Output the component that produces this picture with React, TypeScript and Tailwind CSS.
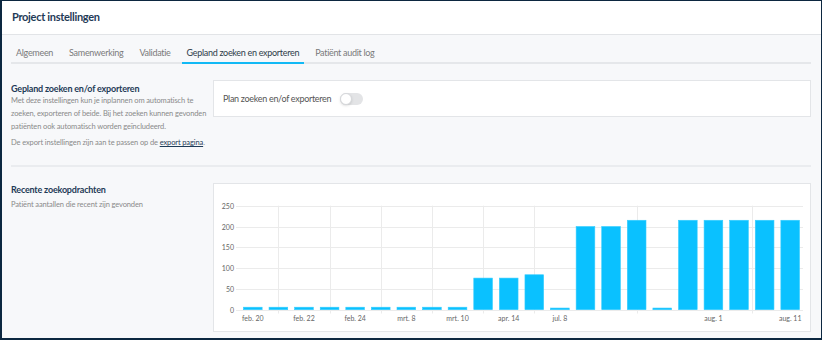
import React from 'react';

const tabs = ['Algemeen', 'Samenwerking', 'Validatie', 'Gepland zoeken en exporteren', 'Patiënt audit log'];
const activeTab = 3;

const values = [6, 6, 6, 6, 6, 6, 6, 6, 6, 76, 76, 84, 4, 200, 200, 215, 4, 215, 215, 215, 215, 215];
const xLabels: Record<number, string> = {
  0: 'feb. 20',
  2: 'feb. 22',
  4: 'feb. 24',
  6: 'mrt. 8',
  8: 'mrt. 10',
  10: 'apr. 14',
  12: 'jul. 8',
  18: 'aug. 1',
  21: 'aug. 11',
};

const Toggle: React.FC = () => (
  <div className="w-[23px] h-[12px] rounded-full bg-[#e3e4e6] relative">
    <div className="absolute left-0 top-0 w-[12px] h-[12px] rounded-full bg-white border border-[#d6d8db] shadow-sm" />
  </div>
);

const BarChart: React.FC = () => {
  const left = 26;
  const right = 589;
  const y0 = 125.7;
  const yTop = 21.7;
  const band = (right - left) / values.length;
  const barW = band * 0.73;
  const scale = (y0 - yTop) / 250;
  const center = (i: number) => left + band / 2 + i * band;
  const vLines = [1, 3, 5, 7, 9, 11, 15].map(center).concat([537.7]);

  return (
    <svg width="596" height="147" className="block">
      {[0, 50, 100, 150, 200, 250].map((v) => {
        const y = Math.round(y0 - v * scale) + 0.5;
        return (
          <g key={v}>
            <line x1={22} x2={right} y1={y} y2={y} stroke="#ebebeb" strokeWidth={1} />
            <text x={20} y={y + 2.4} textAnchor="end" fontSize="7" fill="#666" fontFamily="Lato, 'Liberation Sans', sans-serif">
              {v}
            </text>
          </g>
        );
      })}
      {vLines.map((x, i) => (
        <line key={i} x1={Math.round(x) + 0.5} x2={Math.round(x) + 0.5} y1={yTop} y2={129.5} stroke="#ebebeb" strokeWidth={1} />
      ))}
      {values.map((v, i) => {
        const h = v * scale;
        return (
          <rect
            key={i}
            x={center(i) - barW / 2}
            y={y0 - h}
            width={barW}
            height={h}
            fill="#0ac1ff"
            stroke="#36cdff"
            strokeWidth={0.6}
          />
        );
      })}
      {Object.entries(xLabels).map(([i, label]) => (
        <text
          key={i}
          x={center(Number(i))}
          y={137.3}
          textAnchor="middle"
          fontSize="7"
          fill="#666"
          fontFamily="Lato, 'Liberation Sans', sans-serif"
        >
          {label}
        </text>
      ))}
    </svg>
  );
};

export default function App() {
  return (
    <div
      className="w-[822px] h-[340px] overflow-hidden border-l-2 border-t border-r border-b-2 border-[#0c2740] bg-[#f7f8fa] flex flex-col"
      style={{ fontFamily: "Lato, 'Liberation Sans', sans-serif" }}
    >
      <div className="h-[34px] shrink-0 bg-white border-b border-[#e2e4e7] flex items-center pl-[10px]">
        <h1 className="text-[11px] tracking-[-0.3px] font-bold text-[#1f3b57]">Project instellingen</h1>
      </div>

      <div className="flex-1 pt-[11px] pl-[9px] pr-[10px]">
        <div className="flex gap-[6px] border-b-2 border-[#e5e7ea]">
          {tabs.map((t, i) => (
            <div
              key={t}
              className={
                i === activeTab
                  ? 'px-[5px] pb-[2px] text-[9px] tracking-[-0.3px] leading-[14px] text-[#2d3b48] border-b-2 border-[#12b9f5] -mb-[2px]'
                  : 'px-[5px] pb-[2px] text-[9px] tracking-[-0.3px] leading-[14px] text-[#7a7a7a] border-b-2 border-transparent -mb-[2px]'
              }
            >
              {t}
            </div>
          ))}
        </div>

        <div className="flex mt-[16px]">
          <div className="w-[202px] shrink-0 pt-[2px]">
            <h2 className="text-[9px] tracking-[-0.2px] leading-[13px] font-bold text-[#1f3b57]">Gepland zoeken en/of exporteren</h2>
            <p className="text-[7.5px] tracking-[-0.12px] leading-[12.8px] text-[#8a8a8a] whitespace-nowrap">
              Met deze instellingen kun je inplannen om automatisch te
              <br />
              zoeken, exporteren of beide. Bij het zoeken kunnen gevonden
              <br />
              patiënten ook automatisch worden geïncludeerd.
            </p>
            <p className="mt-[4px] text-[7.5px] tracking-[-0.12px] leading-[12.8px] text-[#8a8a8a] whitespace-nowrap">
              De export instellingen zijn aan te passen op de{' '}
              <a className="text-[#1f3b57] underline">export pagina</a>.
            </p>
          </div>
          <div className="flex-1 self-start h-[37px] bg-white border border-[#e3e5e8] flex items-center pl-[9px] gap-[9px]">
            <span className="text-[9px] tracking-[-0.3px] text-[#555]">Plan zoeken en/of exporteren</span>
            <Toggle />
          </div>
        </div>

        <div className="mt-[15px] h-[2px] bg-[#eaecef]" />

        <div className="flex mt-[16px]">
          <div className="w-[202px] shrink-0">
            <h2 className="text-[9px] tracking-[-0.2px] leading-[13px] font-bold text-[#1f3b57]">Recente zoekopdrachten</h2>
            <p className="mt-[3px] text-[7.5px] tracking-[-0.12px] leading-[12.8px] text-[#8a8a8a]">Patiënt aantallen die recent zijn gevonden</p>
          </div>
          <div className="flex-1 h-[149px] bg-white border border-[#e3e5e8]">
            <BarChart />
          </div>
        </div>
      </div>
    </div>
  );
}
